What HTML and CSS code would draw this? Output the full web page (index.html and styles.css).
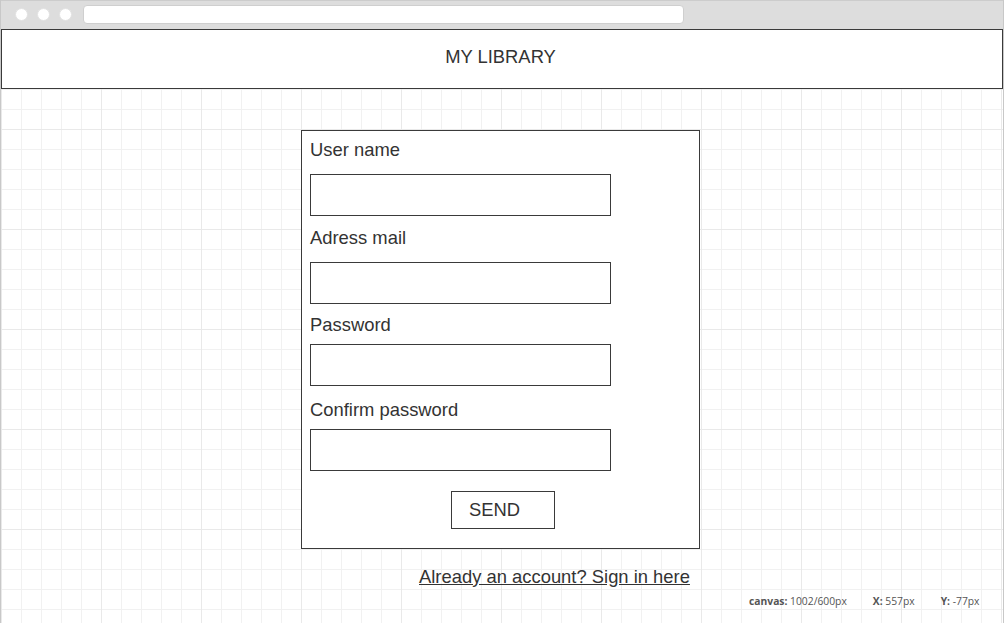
FILE: index.html
```html
<!DOCTYPE html>
<html lang="en">
<head>
<meta charset="utf-8">
<title>My Library</title>
<link rel="stylesheet" href="styles.css">
</head>
<body>
<div class="window">
  <div class="chrome">
    <span class="dot"></span>
    <span class="dot"></span>
    <span class="dot"></span>
    <span class="address"></span>
  </div>
  <div class="canvas">
    <header class="title">MY LIBRARY</header>
    <form class="card">
      <label class="label l1">User name</label>
      <input class="field f1" type="text">
      <label class="label l2">Adress mail</label>
      <input class="field f2" type="text">
      <label class="label l3">Password</label>
      <input class="field f3" type="password">
      <label class="label l4">Confirm password</label>
      <input class="field f4" type="password">
      <button class="send" type="button">SEND</button>
    </form>
    <a class="signin" href="#">Already an account? Sign in here</a>
    <div class="status">
      <span><b>canvas:</b> 1002/600px</span>
      <span><b>X:</b> 557px</span>
      <span><b>Y:</b> -77px</span>
    </div>
  </div>
</div>
</body>
</html>
```

FILE: styles.css
```css
* { box-sizing: border-box; }

html, body {
  margin: 0;
  padding: 0;
  background: #ffffff;
}

body {
  font-family: "Liberation Sans", Arial, sans-serif;
  color: #333333;
}

.window {
  width: 1004px;
  height: 623px;
  border-left: 1px solid #c8c8c8;
  border-right: 1px solid #c8c8c8;
  overflow: hidden;
  display: flex;
  flex-direction: column;
}

.chrome {
  height: 29px;
  flex: none;
  background: #dddddd;
  border-top: 1px solid #cccccc;
  display: flex;
  align-items: center;
  padding-left: 14px;
  padding-bottom: 1px;
}

.dot {
  width: 13px;
  height: 13px;
  border-radius: 50%;
  background: #ffffff;
  border: 1px solid #e2e2e2;
  margin-right: 9px;
  flex: none;
}

.address {
  margin-left: 2px;
  width: 601px;
  height: 19px;
  background: #ffffff;
  border: 1px solid #cfcfcf;
  border-radius: 4px;
}

.canvas {
  position: relative;
  flex: 1;
  background-color: #ffffff;
  background-image:
    linear-gradient(to right, #e9e9e9 1px, transparent 1px),
    linear-gradient(to bottom, #e9e9e9 1px, transparent 1px),
    linear-gradient(to right, #f1f1f1 1px, transparent 1px),
    linear-gradient(to bottom, #f1f1f1 1px, transparent 1px);
  background-size: 100px 100px, 100px 100px, 20px 20px, 20px 20px;
  display: flex;
  flex-direction: column;
  align-items: flex-start;
}

.title {
  width: 1002px;
  height: 60px;
  background: #ffffff;
  border: 1px solid #3a3a3a;
  text-align: center;
  font-size: 18.4px;
  line-height: 20px;
  padding: 17px 3px 0 0;
  color: #333333;
}

.card {
  margin: 41px 0 0 300px;
  width: 399px;
  height: 419px;
  background: #ffffff;
  border: 1px solid #3a3a3a;
  padding: 9px 8px 0 8px;
  display: flex;
  flex-direction: column;
  align-items: flex-start;
}

.label {
  font-size: 18.4px;
  line-height: 20px;
  height: 20px;
  color: #333333;
}

.l2 { margin-top: 12px; }
.l3 { margin-top: 11px; }
.l4 { margin-top: 14px; }

.field {
  width: 301px;
  height: 42px;
  border: 1px solid #3a3a3a;
  background: #ffffff;
  margin: 0;
  padding: 0;
  outline: none;
}

.f1, .f2 { margin-top: 14px; }
.f3, .f4 { margin-top: 9px; }

.send {
  margin: 20px 0 0 141px;
  width: 104px;
  height: 38px;
  background: #ffffff;
  border: 1px solid #3a3a3a;
  border-radius: 0;
  font-family: "Liberation Sans", Arial, sans-serif;
  font-size: 18.4px;
  line-height: 20px;
  color: #333333;
  text-align: left;
  padding: 0 0 1px 17px;
}

.signin {
  margin: 18px 0 0 418px;
  font-size: 18.4px;
  line-height: 20px;
  color: #333333;
  text-decoration: underline;
}

.status {
  position: absolute;
  left: 748px;
  top: 565px;
  font-family: "Open Sans", sans-serif;
  font-size: 10.3px;
  line-height: 14px;
  color: #555555;
  display: flex;
}

.status span + span { margin-left: 26px; }

.status b { font-weight: 700; }
```
